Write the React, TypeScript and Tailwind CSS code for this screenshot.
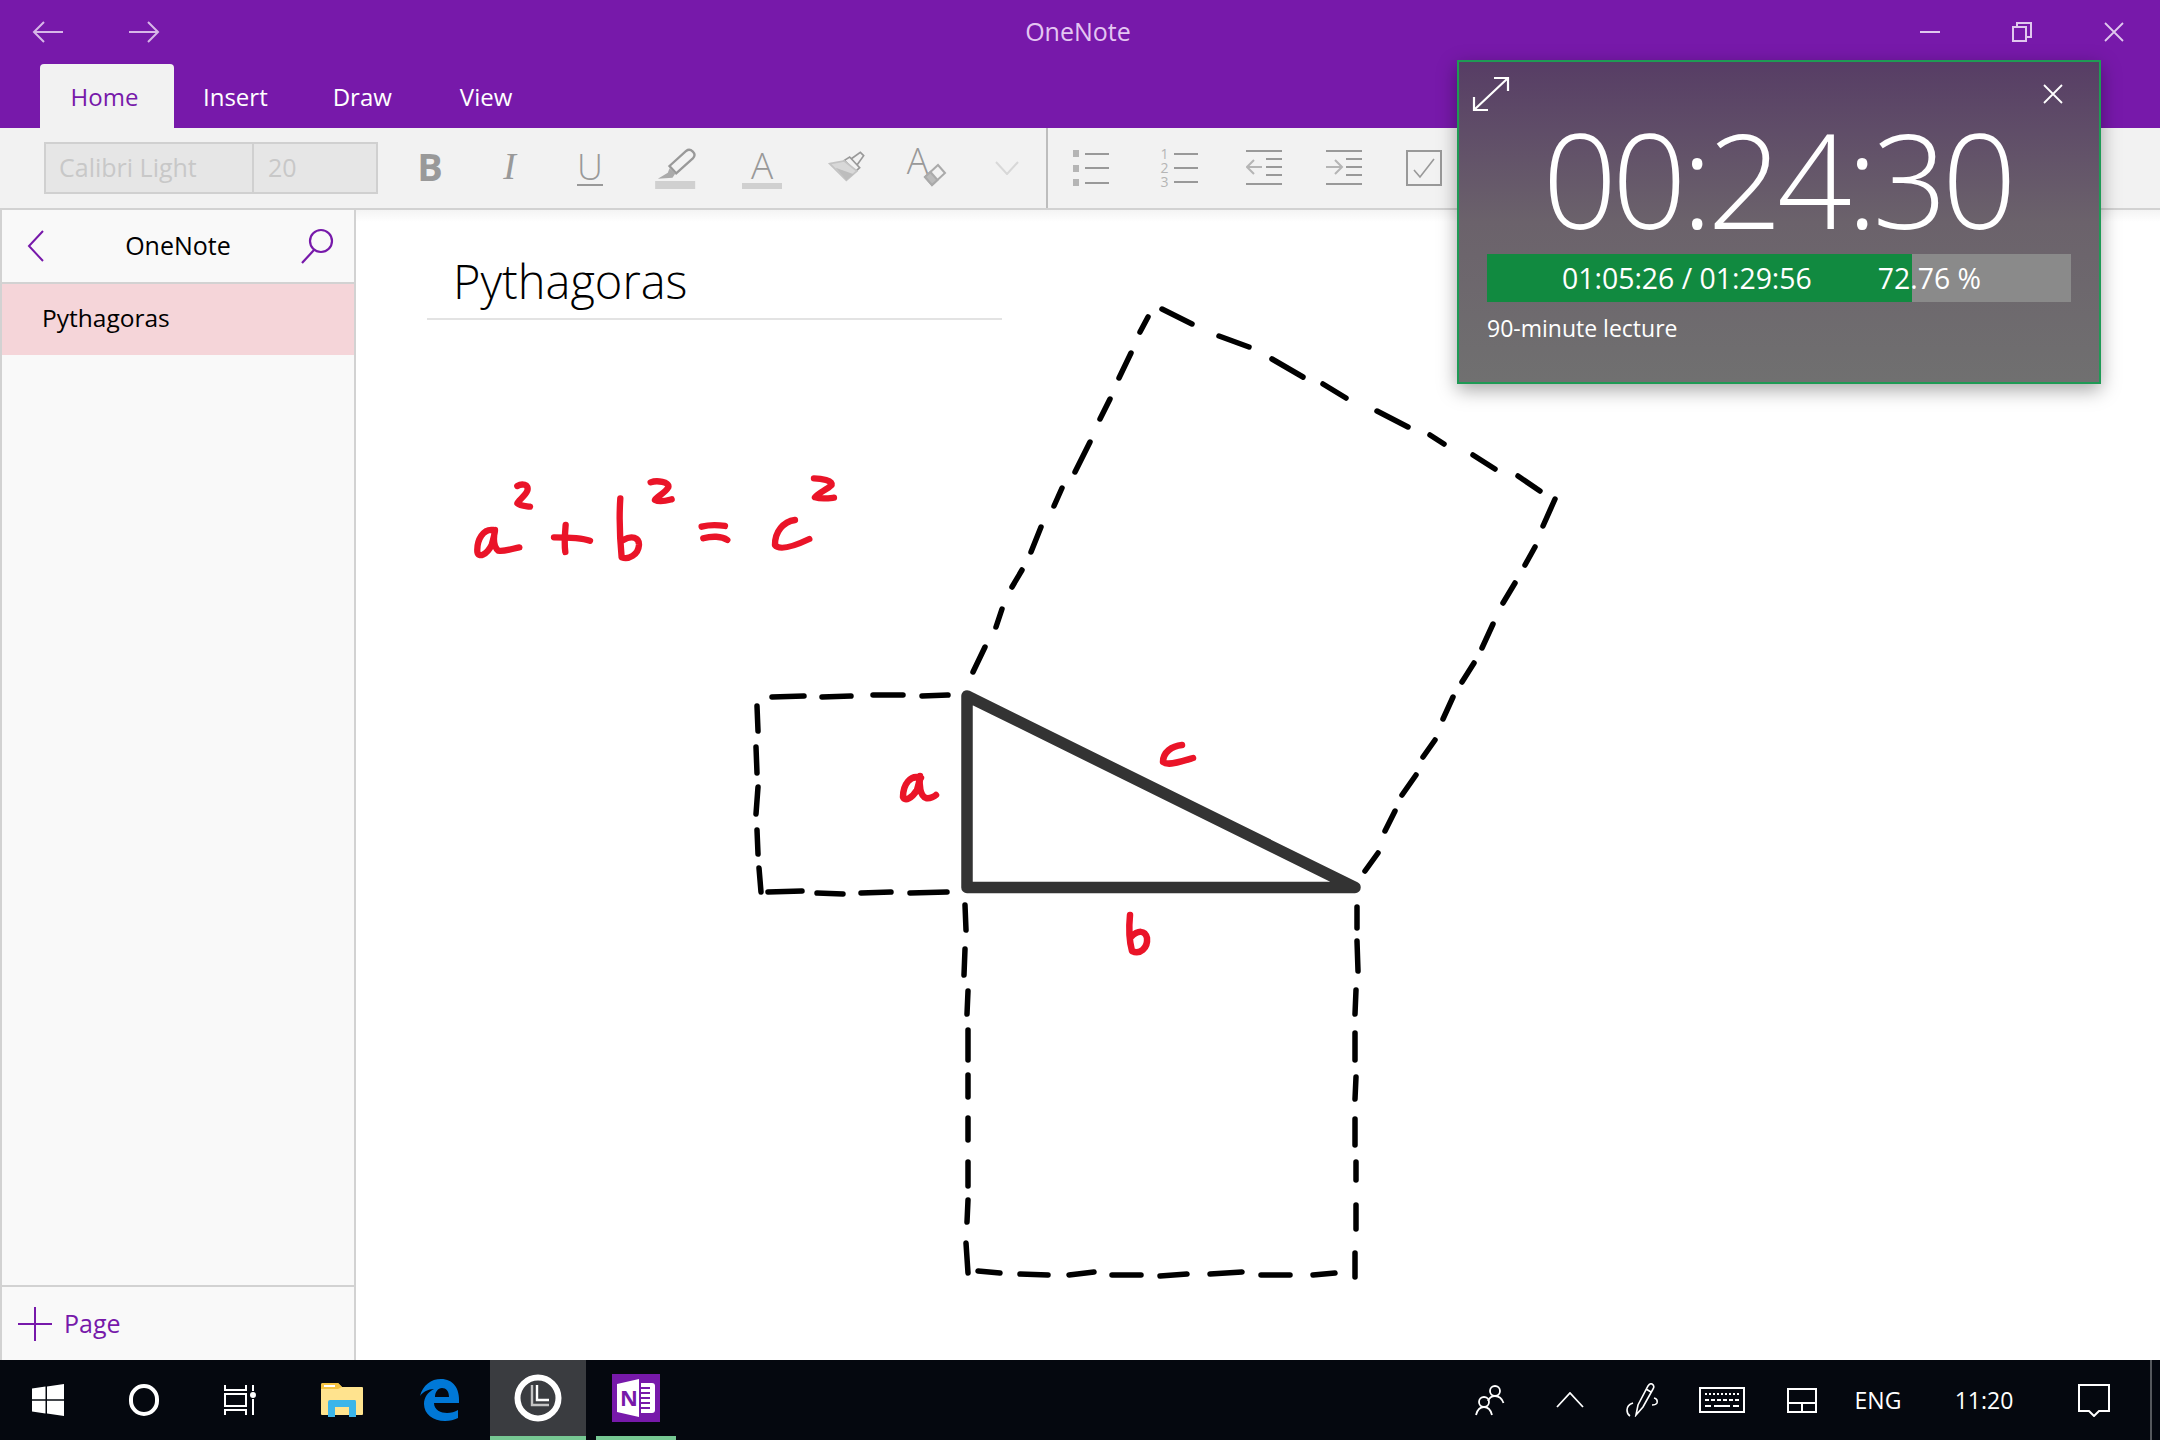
const dashes: number[][] = [
  // big square
  [973, 672, 985, 647], [996, 627, 1002, 609], [1012, 587, 1022, 570], [1031, 552, 1041, 527],
  [1054, 506, 1062, 488], [1075, 472, 1090, 442], [1100, 419, 1110, 399], [1119, 378, 1131, 353],
  [1140, 332, 1148, 317], [1162, 309, 1192, 324], [1219, 336, 1249, 347], [1272, 359, 1303, 377],
  [1323, 384, 1346, 398], [1377, 411, 1408, 427], [1430, 435, 1444, 444], [1473, 455, 1495, 469],
  [1518, 476, 1540, 491], [1555, 499, 1543, 526], [1535, 547, 1525, 565], [1515, 583, 1503, 603],
  [1493, 624, 1482, 648], [1474, 663, 1462, 682], [1453, 697, 1443, 719], [1435, 740, 1423, 757],
  [1416, 775, 1402, 795], [1395, 811, 1385, 831], [1378, 853, 1365, 871],
  // small square
  [772, 697, 804, 696], [822, 697, 851, 696], [873, 695, 903, 695], [922, 696, 948, 695],
  [757, 706, 758, 731], [756, 747, 757, 773], [758, 787, 756, 814], [757, 830, 758, 854],
  [759, 868, 761, 892], [768, 892, 802, 891], [817, 893, 843, 894], [861, 893, 891, 892],
  [910, 893, 947, 892],
  // lower square
  [965, 905, 966, 930], [965, 949, 964, 975], [968, 991, 967, 1014], [968, 1030, 968, 1060],
  [968, 1075, 968, 1097], [968, 1118, 968, 1140], [968, 1162, 968, 1186], [968, 1200, 967, 1222],
  [966, 1243, 968, 1273], [978, 1271, 1000, 1273], [1020, 1274, 1048, 1275], [1069, 1275, 1094, 1272],
  [1112, 1275, 1141, 1275], [1160, 1276, 1187, 1274], [1210, 1274, 1242, 1272], [1261, 1275, 1290, 1275],
  [1313, 1275, 1335, 1273], [1355, 1277, 1355, 1253], [1356, 1229, 1356, 1205], [1356, 1180, 1356, 1162],
  [1355, 1145, 1355, 1119], [1355, 1099, 1356, 1077], [1355, 1060, 1355, 1033], [1355, 1014, 1356, 990],
  [1358, 971, 1357, 941], [1357, 928, 1357, 907],
];

const Drawing = () => (
  <svg className="absolute inset-0" width={1804} height={1150} viewBox="356 210 1804 1150" fill="none" strokeLinecap="round" strokeLinejoin="round">
    {dashes.map((d, i) => (
      <line key={i} x1={d[0]} y1={d[1]} x2={d[2]} y2={d[3]} stroke="#000" strokeWidth={5.5} />
    ))}
    <path d="M967 696 L967 887.5 L1355 887.5 Z" stroke="#333" strokeWidth={11.5} />
    <g stroke="#ea1428" strokeWidth={6.5}>
      <path d="M921 778 C910 774 903 785 903 797 C905 802 912 798 917 790 C919 783 920 778 920 776 C919 785 920 796 926 798 C930 799 935 796 936 795" />
      <path d="M1182 745 C1172 746 1163 752 1163 762 C1168 766 1180 762 1193 758" />
      <path d="M1130 915 C1129 925 1129 940 1132 951 C1140 955 1148 948 1147 938 C1145 930 1138 930 1131 937" />
    </g>
    <g transform="translate(440 450) scale(0.3333)" stroke="#ea1428" strokeWidth={19}>
      <path d="M160 240 C130 235 110 270 112 305 C115 325 140 315 155 285 C160 265 165 250 165 240 C160 265 160 290 175 302 C195 305 220 295 238 292" />
      <path d="M232 108 C245 100 268 102 262 122 C255 140 235 150 232 160 C240 168 258 168 270 170" />
      <path d="M342 262 C375 262 420 262 450 272" />
      <path d="M377 225 C375 250 372 280 376 306" />
      <path d="M541 145 C538 190 540 270 545 322 C565 330 595 315 597 285 C598 262 575 255 550 270" />
      <path d="M632 97 C650 90 690 95 685 112 C675 130 650 140 645 150 C660 158 680 152 695 148" />
      <path d="M785 230 C805 225 835 225 855 228" />
      <path d="M790 265 C815 258 845 258 862 270" />
      <path d="M1065 210 C1030 215 1005 245 1005 285 C1020 305 1070 285 1108 267" />
      <path d="M1122 85 C1145 85 1178 92 1175 105 C1160 120 1135 128 1125 142 C1145 148 1165 145 1182 143" />
    </g>
  </svg>
);

const Arrow = ({ flip }: { flip?: boolean }) => (
  <svg width={32} height={24} viewBox="0 0 32 24" fill="none" stroke="#d7b7e8" strokeWidth={2} className={flip ? 'rotate-180' : ''}>
    <path d="M31 12 H2 M12 2 L2 12 L12 22" />
  </svg>
);

const Close = ({ size, color }: { size: number; color: string }) => (
  <svg width={size} height={size} viewBox="0 0 20 20" fill="none" stroke={color} strokeWidth={1.8}>
    <path d="M1 1 L19 19 M19 1 L1 19" />
  </svg>
);

const Highlighter = () => (
  <svg width={47} height={45} viewBox="30 15 140 135" fill="none">
    <path d="M85 75 L135 30 Q145 22 155 32 Q165 42 155 52 L105 97 Z" stroke="#999" strokeWidth={7} />
    <path d="M85 82 L103 97 L94 110 L50 113 L80 95 Z" fill="#aaa" />
    <rect x={42} y={120} width={120} height={24} fill="#d0d0d0" />
  </svg>
);

const Brush = () => (
  <svg width={40} height={36} viewBox="560 35 120 108" fill="none" stroke="#999" strokeWidth={5}>
    <path d="M632 62 L660 42 L670 52 L650 80" />
    <path d="M612 66 L628 56 L658 88 L645 100 Z" />
    <path d="M568 76 L612 68 L650 98 L618 126 Z" fill="#d8d8d8" stroke="#c4c4c4" />
    <path d="M586 88 L640 108 L618 126 Z" fill="#bdbdbd" stroke="none" />
  </svg>
);

const Eraser = () => (
  <svg width={24} height={24} viewBox="0 0 24 24" fill="none" stroke="#aaa" strokeWidth={2}>
    <path d="M2 14 L15 2 L22 10 L9 22 Z" />
    <path d="M2 14 L7.5 9 L14.5 17 L9 22 Z" fill="#bbb" />
  </svg>
);

const Bullets = () => (
  <svg width={38} height={36} viewBox="0 0 38 36" fill="none" stroke="#999" strokeWidth={2}>
    <path d="M13 4 H37 M13 18 H37 M13 33 H37" />
    <g fill="#b5b5b5" stroke="none">
      <rect x={1} y={0} width={6} height={7} />
      <rect x={1} y={15} width={6} height={7} />
      <rect x={1} y={29} width={6} height={7} />
    </g>
  </svg>
);

const Numbers = () => (
  <div className="flex items-center">
    <div className="flex flex-col text-[14px] leading-[14px] text-[#b5b5b5]">
      <span>1</span>
      <span>2</span>
      <span>3</span>
    </div>
    <svg className="ml-[5px]" width={24} height={42} viewBox="0 0 24 42" fill="none" stroke="#999" strokeWidth={2}>
      <path d="M0 7 H24 M0 21 H24 M0 35 H24" />
    </svg>
  </div>
);

const Indent = ({ back }: { back?: boolean }) => (
  <svg width={36} height={36} viewBox="0 0 36 36" fill="none" stroke="#999" strokeWidth={2}>
    <path d="M0 1 H36 M0 34 H36 M20 9 H36 M20 17 H36 M20 25 H36" />
    <path d={back ? 'M16 17 H1 M8 10 L1 17 L8 24' : 'M0 17 H15 M9 10 L16 17 L9 24'} stroke="#b5b5b5" />
  </svg>
);

const Checkbox = () => (
  <svg width={36} height={36} viewBox="0 0 36 36" fill="none" stroke="#999">
    <rect x={1} y={1} width={34} height={34} strokeWidth={2} />
    <path d="M8 20 L14 27 L28 9" strokeWidth={1.6} />
  </svg>
);

const Expand = () => (
  <svg width={38} height={36} viewBox="0 0 38 36" fill="none" stroke="#fff" strokeWidth={2.2}>
    <path d="M2 34 L36 2 M22 2 H36 V15 M2 21 V34 H16" />
  </svg>
);

const WinLogo = () => (
  <svg width={32} height={32} viewBox="0 0 32 32" fill="#fff">
    <path d="M0 4.5 L13.5 2.6 V15.3 H0 Z M15 2.4 L32 0 V15.3 H15 Z M0 16.8 H13.5 V29.4 L0 27.5 Z M15 16.8 H32 V32 L15 29.6 Z" />
  </svg>
);

const TaskView = () => (
  <svg width={32} height={32} viewBox="0 0 32 32" fill="none" stroke="#fff" strokeWidth={2}>
    <path d="M1 1 V6 H22 V1 M1 31 V26 H22 V31 M29 1 V7 M29 15 V31" />
    <rect x={1} y={10} width={21} height={12} />
    <circle cx={29} cy={11} r={3} fill="#fff" stroke="none" />
  </svg>
);

const Explorer = () => (
  <svg width={42} height={34} viewBox="0 0 42 34">
    <path d="M0 2 Q0 0 2 0 H17 L21 4 H41 Q42 4 42 5 V31 Q42 32 41 32 H1 Q0 32 0 31 Z" fill="#ffe38e" />
    <path d="M0 2 Q0 0 2 0 H17 L21 4 L17 6 H0 Z" fill="#f5c342" />
    <rect x={3} y={2} width={11} height={2} fill="#fff" />
    <path d="M7 19 Q7 17 9 17 H34 Q35 17 35 19 V34 H28 V24 H14 V34 H7 Z" fill="#3bb5ea" />
  </svg>
);

const Edge = () => (
  <svg width={40} height={42} viewBox="0 0 40 42" fill="#0078d7">
    <path d="M0 17 C3 6 11 0 21 0 C33 0 40 9 39 24 H14 C14 31 21 34 27 34 C31 34 35 33 38 31 V39 C34 41 30 42 25 42 C13 42 4 35 4 25 C4 18 8 13 14 10 C8 10 3 13 0 17 Z M15 18 H29 C29 12 26 9 22 9 C18 9 15 13 15 18 Z" fillRule="evenodd" />
  </svg>
);

const TimerLogo = () => (
  <svg width={48} height={48} viewBox="0 0 48 48" fill="none">
    <circle cx={24} cy={24} r={20.5} stroke="#fff" strokeWidth={6} />
    <path d="M18 11 V31 H35" stroke="#c4c4c4" strokeWidth={2.4} />
    <path d="M23 11 V26 H35" stroke="#fff" strokeWidth={2.4} />
  </svg>
);

const OneNoteLogo = () => (
  <svg width={48} height={48} viewBox="0 0 48 48">
    <rect width={48} height={48} fill="#7719aa" />
    <path d="M5 10 L27 5 V43 L5 38 Z" fill="#fff" />
    <text x={8} y={32} fontSize={22} fontWeight={700} fill="#7719aa" fontFamily="Open Sans, sans-serif">N</text>
    <path d="M29 9 H40 Q43 9 43 12 V36 Q43 39 40 39 H29 Z" fill="#fff" />
    <path d="M29 14 H38 M29 19 H38 M29 24 H38 M29 29 H38 M29 34 H38" stroke="#7719aa" strokeWidth={2} />
  </svg>
);

const People = () => (
  <svg width={30} height={32} viewBox="0 0 30 32" fill="none" stroke="#fff" strokeWidth={1.8}>
    <circle cx={20} cy={7} r={5} />
    <path d="M13 17 Q15 12 20 12 Q26 12 28.5 19" />
    <circle cx={9} cy={18} r={5} />
    <path d="M1 31 Q3 23 9 23 Q15 23 17 31" />
  </svg>
);

const Pen = () => (
  <svg width={34} height={34} viewBox="0 0 34 34" fill="none" stroke="#fff" strokeWidth={1.6}>
    <path d="M11 32 L13 22 L23 3 Q25 0 27 1 Q30 3 28 6 L18 24 Z M21 6 L26 9" />
    <path d="M8 20 Q2 22 2 27 Q2 31 5 33 M29 15 Q33 16 32 20 Q31 22 27 22" />
  </svg>
);

const Keyboard = () => (
  <svg width={46} height={26} viewBox="0 0 46 26" fill="none" stroke="#fff">
    <rect x={1} y={1} width={44} height={24} strokeWidth={2} />
    <path d="M6 7 H40" strokeWidth={2} strokeDasharray="2 2" />
    <path d="M6 13 H40" strokeWidth={2} strokeDasharray="4 2" />
    <path d="M6 19 H12 M15 19 H31 M34 19 H40" strokeWidth={2} />
  </svg>
);

const Touchpad = () => (
  <svg width={30} height={25} viewBox="0 0 30 25" fill="none" stroke="#fff" strokeWidth={2}>
    <rect x={1} y={1} width={28} height={23} />
    <path d="M1 15 H29 M15 15 V24" />
  </svg>
);

const Notification = () => (
  <svg width={32} height={33} viewBox="0 0 32 33" fill="none" stroke="#fff" strokeWidth={2}>
    <path d="M1 1 H31 V27 H21 L16 32 L11 27 H1 Z" />
  </svg>
);

const ribbonCell = 'flex items-center justify-center h-full';
const trayCell = 'flex items-center justify-center h-full text-white text-[23px]';

export default function App() {
  return (
    <div className="relative w-[2160px] h-[1440px] overflow-hidden flex flex-col bg-white font-['Open_Sans',sans-serif] text-black">
      <div className="h-[128px] bg-[#7719aa] flex flex-col">
        <div className="h-[64px] flex items-center">
          <div className="w-24 flex justify-center"><Arrow /></div>
          <div className="w-24 flex justify-center"><Arrow flip /></div>
          <div className="flex-1 pl-[80px] text-center text-[25px] text-[#e4c6f2]">OneNote</div>
          <div className="w-[92px] flex justify-center">
            <div className="w-[20px] h-[2px] bg-[#e0c8ee]" />
          </div>
          <div className="w-[92px] flex justify-center">
            <svg width={20} height={20} viewBox="0 0 20 20" fill="none" stroke="#e0c8ee" strokeWidth={2}>
              <rect x={1} y={5} width={13} height={14} />
              <path d="M5 5 V1 H19 V15 H14" />
            </svg>
          </div>
          <div className="w-[92px] flex justify-center"><Close size={20} color="#e0c8ee" /></div>
        </div>
        <div className="h-[64px] flex items-center pl-[40px] pt-[2px] text-[24px] text-white">
          <div className="w-[134px] h-[64px] -mt-[2px] pt-[2px] pr-[5px] flex items-center justify-center bg-[#f2f2f2] rounded-t-[4px] text-[#7719aa]">Home</div>
          <span className="ml-[29px]">Insert</span>
          <span className="ml-[65px]">Draw</span>
          <span className="ml-[68px]">View</span>
        </div>
      </div>

      <div className="h-[82px] bg-[#f2f2f2] border-b-2 border-[#d2d2d2] flex items-center pl-[44px]">
        <div className="w-[334px] h-[52px] flex bg-[#e6e6e6] border-2 border-[#d0d0d0] text-[25px] text-[#c8c8c8]">
          <div className="w-[208px] border-r-2 border-[#d0d0d0] pl-[13px] flex items-center">Calibri Light</div>
          <div className="flex-1 pl-[14px] flex items-center">20</div>
        </div>
        <div className="h-full flex ml-[12px]">
          <div className={`w-[80px] ${ribbonCell} text-[38px] font-bold text-[#999] -mt-[2px]`}>B</div>
          <div className={`w-[79px] ${ribbonCell} text-[38px] italic text-[#999] font-['Liberation_Serif',serif] -mt-[2px]`}>I</div>
          <div className={`w-[82px] ${ribbonCell} text-[36px] font-light text-[#999]`}>
            <span className="leading-[34px] border-b-2 border-[#999]">U</span>
          </div>
          <div className={`w-[86px] ${ribbonCell}`}><Highlighter /></div>
          <div className={`w-[90px] ${ribbonCell} flex-col`}>
            <span className="text-[37px] font-light leading-[33px] text-[#999]">A</span>
            <div className="w-[40px] h-[6px] mt-[2px] bg-[#d0d0d0]" />
          </div>
          <div className={`w-[79px] ${ribbonCell}`}><Brush /></div>
          <div className={`w-[82px] ${ribbonCell}`}>
            <span className="text-[36px] font-light leading-[36px] text-[#999] -mt-[14px]">A</span>
            <div className="mt-[14px] -ml-[5px]"><Eraser /></div>
          </div>
          <div className={`w-[78px] ${ribbonCell}`}>
            <svg width={24} height={14} viewBox="0 0 24 14" fill="none" stroke="#d8d8d8" strokeWidth={2}>
              <path d="M1 1 L12 13 L23 1" />
            </svg>
          </div>
          <div className="w-[2px] h-full bg-[#bdbdbd]" />
          <div className={`w-[86px] ${ribbonCell}`}><Bullets /></div>
          <div className={`w-[90px] ${ribbonCell}`}><Numbers /></div>
          <div className={`w-[80px] ${ribbonCell}`}><Indent back /></div>
          <div className={`w-[80px] ${ribbonCell}`}><Indent /></div>
          <div className={`w-[80px] ${ribbonCell}`}><Checkbox /></div>
        </div>
      </div>

      <div className="flex-1 flex min-h-0">
        <div className="w-[356px] bg-[#f9f9f9] border-x-2 border-[#d2d2d2] flex flex-col">
          <div className="h-[74px] border-b-2 border-[#d2d2d2] flex items-center justify-between pl-[25px] pr-[20px]">
            <svg width={18} height={32} viewBox="0 0 18 32" fill="none" stroke="#7719aa" strokeWidth={2}>
              <path d="M16 1 L2 16 L16 31" />
            </svg>
            <span className="ml-[11px] text-[25px]">OneNote</span>
            <svg width={34} height={36} viewBox="0 0 34 36" fill="none" stroke="#7719aa" strokeWidth={2.2}>
              <circle cx={21} cy={13} r={11} />
              <path d="M14 22 L2 35" />
            </svg>
          </div>
          <div className="h-[71px] bg-[#f5d5d9] flex items-center pl-[40px] pb-[2px] text-[24.5px]">Pythagoras</div>
          <div className="flex-1" />
          <div className="h-[75px] border-t-2 border-[#d2d2d2] flex items-center pl-[15px] text-[#7719aa] text-[25px]">
            <svg width={36} height={36} viewBox="0 0 36 36" fill="none" stroke="#7719aa" strokeWidth={2}>
              <path d="M18 1 V35 M1 18 H35" />
            </svg>
            <span className="ml-[11px]">Page</span>
          </div>
        </div>

        <div className="relative flex-1">
          <div className="h-[12px] bg-gradient-to-b from-[#f4f4f4] to-white" />
          <div className="w-[575px] ml-[71px] mt-[28px] pb-[6px] pl-[26px] border-b-2 border-[#e3e3e3] text-[47px] font-light leading-[62px]">
            Pythagoras
          </div>
          <Drawing />
        </div>
      </div>

      <div className="h-[80px] bg-[#05080f] flex">
        <div className="w-24 flex items-center justify-center"><WinLogo /></div>
        <div className="w-24 flex items-center justify-center">
          <div className="w-[30px] h-[32px] rounded-full border-[4px] border-white" />
        </div>
        <div className="w-24 flex items-center justify-center"><TaskView /></div>
        <div className="w-[108px] flex items-center justify-center"><Explorer /></div>
        <div className="w-[94px] pr-[6px] flex items-center justify-center"><Edge /></div>
        <div className="w-24 flex flex-col bg-[#3a3c40]">
          <div className="flex-1 flex items-center justify-center"><TimerLogo /></div>
          <div className="h-[4px] bg-[#76c893]" />
        </div>
        <div className="w-[100px] flex flex-col">
          <div className="flex-1 flex items-center justify-center"><OneNoteLogo /></div>
          <div className="h-[4px] mx-[10px] bg-[#76c893]" />
        </div>
        <div className="ml-auto flex">
          <div className={`w-[80px] ${trayCell}`}><People /></div>
          <div className={`w-[80px] ${trayCell}`}>
            <svg width={28} height={16} viewBox="0 0 28 16" fill="none" stroke="#fff" strokeWidth={1.8}>
              <path d="M1 15 L14 1 L27 15" />
            </svg>
          </div>
          <div className={`w-[64px] ${trayCell}`}><Pen /></div>
          <div className={`w-[95px] ${trayCell}`}><Keyboard /></div>
          <div className={`w-[65px] ${trayCell}`}><Touchpad /></div>
          <div className={`w-[88px] ${trayCell}`}>ENG</div>
          <div className={`w-[124px] ${trayCell}`}>11:20</div>
          <div className={`w-[96px] ${trayCell}`}><Notification /></div>
          <div className="w-[2px] ml-[8px] bg-[#55585c]" />
          <div className="w-[8px]" />
        </div>
      </div>

      <div className="absolute top-[60px] left-[1457px] w-[644px] h-[324px] border-2 border-[#1f9a55] bg-gradient-to-b from-[#573d65] via-[#6b626b] via-50% to-[#707070] shadow-[0_6px_18px_rgba(0,0,0,0.35)] text-white flex flex-col px-[28px]">
        <div className="h-[50px] flex items-end justify-between -ml-[15px] -mr-[13px]">
          <Expand />
          <div className="mr-[21px] mb-[8px]"><Close size={20} color="#fff" /></div>
        </div>
        <div className="h-[132px] pr-[4px] flex items-center justify-center text-[131px] font-[350] tracking-[-0.04em] leading-none">00:24:30</div>
        <div className="h-[10px]" />
        <div className="relative h-[48px] bg-[#8a8a8a]">
          <div className="absolute inset-y-0 left-0 w-[425px] bg-[#118a40]" />
          <div className="relative h-full flex items-center text-[28.4px] leading-none pl-[75px]">
            <span>01:05:26 / 01:29:56</span>
            <span className="ml-[66px]">72.76 %</span>
          </div>
        </div>
        <div className="mt-[10px] text-[23px] leading-[32px]">90-minute lecture</div>
      </div>
    </div>
  );
}
